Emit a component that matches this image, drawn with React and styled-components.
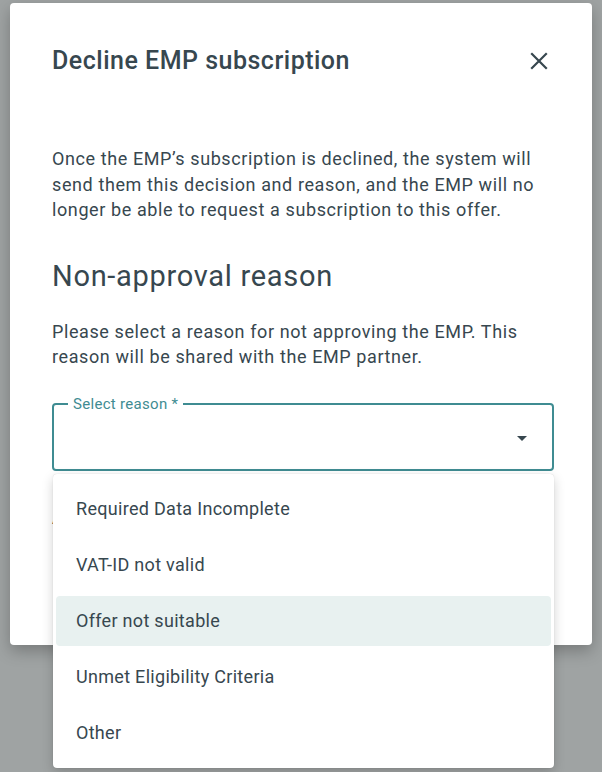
import styled, { createGlobalStyle } from 'styled-components';

const GlobalStyle = createGlobalStyle`
    html, body {
        margin: 0;
        padding: 0;
    }
    body {
        background-color: #9fa3a3;
        font-family: Roboto, "Liberation Sans", sans-serif;
        color: #37474f;
    }
`;

const reasons = [
    'Required Data Incomplete',
    'VAT-ID not valid',
    'Offer not suitable',
    'Unmet Eligibility Criteria',
    'Other',
];

const CloseIcon = () => (
    <svg width="24" height="24" viewBox="0 0 24 24" fill="none">
        <path d="M5 5L19 19M19 5L5 19" stroke="#37474f" strokeWidth="2.2" strokeLinecap="square" />
    </svg>
);

const App = () => {
    const hovered = 2;

    return (
        <>
            <GlobalStyle />
            <Page>
                <Dialog>
                    <Header>
                        <Title>Decline EMP subscription</Title>
                        <CloseButton aria-label="close">
                            <CloseIcon />
                        </CloseButton>
                    </Header>

                    <Text>
                        Once the EMP’s subscription is declined, the system will send them this
                        decision and reason, and the EMP will no longer be able to request a
                        subscription to this offer.
                    </Text>

                    <Heading>Non-approval reason</Heading>

                    <Text $gap={25}>
                        Please select a reason for not approving the EMP. This reason will be
                        shared with the EMP partner.
                    </Text>

                    <SelectWrap>
                        <Field>
                            <Legend>Select reason *</Legend>
                            <Arrow />
                        </Field>

                        <Menu>
                            {reasons.map((reason, idx) => (
                                <Item key={reason} $active={idx === hovered}>
                                    {reason}
                                </Item>
                            ))}
                        </Menu>
                    </SelectWrap>

                    {/* sits under the open menu, only its first letter peeks out */}
                    <Label>Additional comments</Label>

                    <Actions>
                        <Button>Decline</Button>
                    </Actions>
                </Dialog>
            </Page>
        </>
    );
};

const Page = styled.div`
    min-height: 772px;
    padding: 3px 10px 0;
    box-sizing: border-box;
`;

const Dialog = styled.div`
    background-color: #ffffff;
    border-radius: 4px;
    box-shadow: 0 6px 16px rgba(0, 0, 0, 0.25);
    padding: 42px 38px 46px 42px;
    display: flex;
    flex-direction: column;
`;

const Header = styled.div`
    display: flex;
    align-items: center;
    justify-content: space-between;
    height: 32px;
`;

const Title = styled.h2`
    margin: 0;
    font-size: 25px;
    font-weight: 500;
    line-height: 32px;
    letter-spacing: 0.5px;
`;

const CloseButton = styled.button`
    border: none;
    background: none;
    padding: 0;
    margin-right: 3px;
    width: 24px;
    height: 24px;
    display: flex;
    cursor: pointer;
`;

const Text = styled.p`
    margin: ${({ $gap }) => $gap ?? 69}px 0 0;
    font-size: 18px;
    line-height: 25.5px;
    letter-spacing: 0.6px;
`;

const Heading = styled.h3`
    margin: 35px 0 0;
    font-size: 29px;
    font-weight: 400;
    line-height: 36px;
    letter-spacing: 0.7px;
`;

const SelectWrap = styled.div`
    position: relative;
    margin-top: 33px;
`;

const Field = styled.div`
    position: relative;
    height: 68px;
    border: 2px solid #3f8c92;
    border-radius: 4px;
    box-sizing: border-box;
`;

const Legend = styled.span`
    position: absolute;
    top: -10px;
    left: 14px;
    padding: 0 5px;
    background-color: #ffffff;
    color: #3f8c92;
    font-size: 15px;
    line-height: 18px;
    letter-spacing: 0.3px;
`;

const Arrow = styled.span`
    position: absolute;
    right: 25px;
    top: 31px;
    width: 0;
    height: 0;
    border-left: 5px solid transparent;
    border-right: 5px solid transparent;
    border-top: 5px solid #37474f;
`;

const Menu = styled.div`
    position: absolute;
    top: 71px;
    left: 1px;
    right: 0;
    z-index: 2;
    background-color: #ffffff;
    border-radius: 4px;
    box-shadow: 0 4px 12px rgba(0, 0, 0, 0.18), 0 0 1px rgba(0, 0, 0, 0.2);
    padding: 10px 3px;
    display: flex;
    flex-direction: column;
    gap: 6px;
`;

const Item = styled.div`
    height: 50px;
    display: flex;
    align-items: center;
    padding-left: 20px;
    border-radius: 4px;
    font-size: 18px;
    letter-spacing: 0.3px;
    background-color: ${({ $active }) => ($active ? '#e8f1f0' : 'transparent')};
    cursor: pointer;
`;

const Label = styled.div`
    margin-top: 36px;
    font-size: 16px;
    line-height: 24px;
`;

const Actions = styled.div`
    display: flex;
    justify-content: flex-end;
    margin-top: 28px;
`;

const Button = styled.button`
    height: 40px;
    padding: 0 24px;
    border: 2px solid #3f8c92;
    border-radius: 4px;
    background: #ffffff;
    color: #3f8c92;
    font-family: Roboto, sans-serif;
    font-size: 15px;
`;

export default App;
